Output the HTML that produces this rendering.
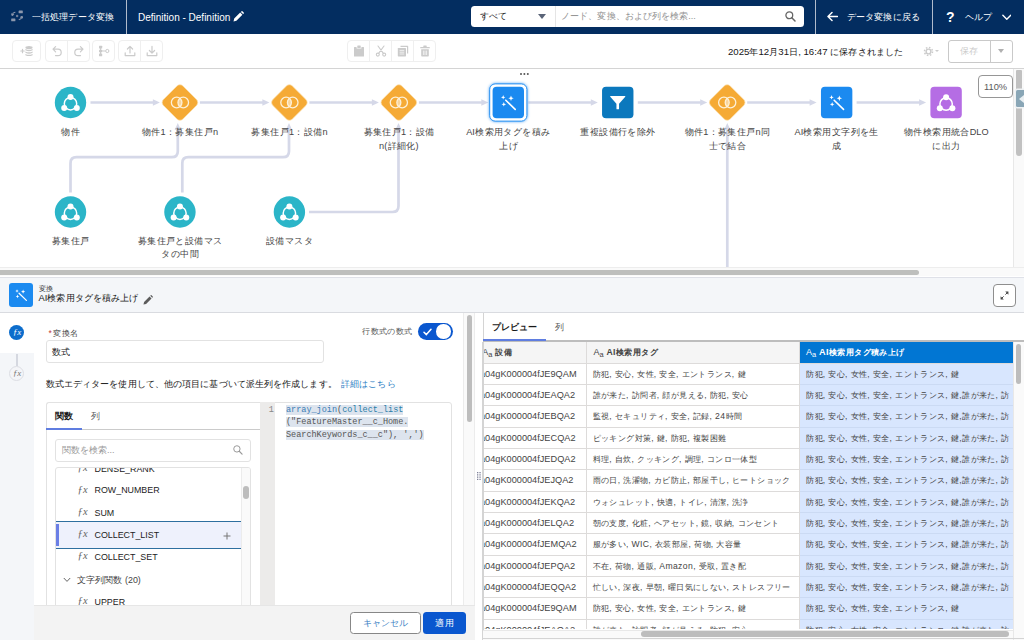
<!DOCTYPE html>
<html lang="ja"><head><meta charset="utf-8">
<style>
*{box-sizing:border-box;margin:0;padding:0}
html,body{width:1024px;height:640px;overflow:hidden;background:#fff;font-family:"Liberation Sans",sans-serif;font-size:11px;color:#181818}
.abs{position:absolute}
.l{font-size:1.09em}
.l6{font-size:1.06em}
.lbl .l{font-size:9.2px}
.c2 .l{font-size:8.6px}
#hdr{position:absolute;left:0;top:0;width:1024px;height:33.7px;background:#032d60;color:#fff}
#hdr .t{position:absolute;top:10.5px;font-size:9.1px;line-height:13px;white-space:nowrap}
#hdr .vd{position:absolute;top:0;width:1px;height:34px;background:#b0bbcc}
#tb{position:absolute;left:0;top:34px;width:1024px;height:35px;background:#fff;border-bottom:1px solid #d4d4d4}
.bg{position:absolute;top:6.3px;height:22px;border:1px solid #efefef;border-radius:4px;background:#fff;display:flex}
.bg>div{width:22px;height:20px;border-right:1px solid #efefef;position:relative}
.bg>div:last-child{border-right:0}
.bg svg{position:absolute;left:5px;top:4px;width:12px;height:12px}
#cv{position:absolute;left:0;top:69px;width:1024px;height:208px;background:#fff;overflow:hidden}
.lbl{position:absolute;width:120px;text-align:center;font-size:9.45px;line-height:13.7px;color:#444;white-space:nowrap}
.nd{position:absolute;width:32px;height:32px}

#bp{position:absolute;left:0;top:276px;width:1024px;height:364px;background:#fff;overflow:hidden}
#bp .ph{position:absolute;left:0;top:0.6px;width:1024px;height:36px;background:#f4f6f9;border-top:1px solid #dfe1e8;border-bottom:1px solid #d9dbe0}
.t84{font-size:8.4px;line-height:11px;white-space:nowrap;color:#444}
.t91{font-size:9.1px;line-height:12px;white-space:nowrap;color:#181818}
.fx{font-family:"Liberation Serif",serif;font-style:italic;font-size:10.5px;line-height:12px;color:#666;position:absolute;left:21.5px;letter-spacing:0.2px}
.li{position:absolute;left:0;width:185px;height:22.2px}
.li .n{position:absolute;left:38.5px;top:5.4px;font-size:8.9px;line-height:12px;color:#222;white-space:nowrap}
.li .fx{top:4.5px}
#tbl{position:absolute;left:483px;top:65.8px;width:531px;height:287px;overflow:hidden}
.row{position:absolute;left:0;width:531px;height:21.33px;border-bottom:1px solid #dddbda;background:#fff}
.row div{position:absolute;top:0;height:100%;font-size:8.4px;line-height:20.8px;white-space:nowrap;overflow:hidden;color:#444;letter-spacing:0.4px}
.c1 span{letter-spacing:0}
.c1{left:-3px;width:106.6px;border-right:1px solid #dddbda}
.c1 span{font-size:9.2px}
.c2{left:103px;width:213.5px;padding-left:6.5px;border-right:1px solid #dddbda}
.c3{left:317px;width:213px;padding-left:6px;background:#d8e6fe;box-shadow:0 1px 0 #cbdaf3}
i{display:inline-block;width:1em;text-align:center;font-style:normal;letter-spacing:0}
</style></head><body>
<div id="hdr">
<svg class="abs" style="left:11px;top:10.4px" width="12.4" height="12" viewBox="0 0 12.4 12"><g fill="#8d98ad"><rect x="7.6" y="0.5" width="4.2" height="2.7" rx="0.5"/><rect x="0.2" y="8.5" width="4.2" height="2.7" rx="0.5"/><circle cx="6.1" cy="5.9" r="1.25" fill="#6f7d98"/></g><g fill="none" stroke="#8d98ad" stroke-width="1.05" stroke-linecap="round" stroke-linejoin="round"><path d="M1.2 5.2 Q1.6 2.6 4 2.2"/><path d="M0.6 3.9 L1.2 5.4 L2.6 4.6"/><path d="M11 6.6 Q10.6 9.2 8.2 9.6"/><path d="M11.6 7.9 L11 6.4 L9.6 7.2"/></g></svg>
<div class="t" style="left:32px"><i>一</i><i>括</i><i>処</i><i>理</i><i>デ</i><i>ー</i><i>タ</i><i>変</i><i>換</i></div>
<div class="vd" style="left:126px"></div>
<div class="t" style="left:138px;font-size:10px">Definition - Definition</div>
<svg class="abs" style="left:233px;top:11px" width="11" height="11" viewBox="0 0 11 11"><path d="M0.5 10.5 L1.2 7.6 L7.2 1.6 L9.4 3.8 L3.4 9.8 Z M7.9 0.9 L8.6 0.2 Q9 -0.1 9.4 0.3 L10.7 1.6 Q11.1 2 10.8 2.4 L10.1 3.1 Z" fill="#fff"/></svg>
<div class="abs" style="left:471px;top:5.5px;width:85px;height:21.7px;background:#fff;border-radius:3.5px 0 0 3.5px;border-right:1px solid #e5e5e5"></div>
<div class="abs" style="left:480px;top:10px;font-size:9.1px;line-height:13px;color:#181818"><i>す</i><i>べ</i><i>て</i></div>
<div class="abs" style="left:537.5px;top:14.3px;width:0;height:0;border-left:4.2px solid transparent;border-right:4.2px solid transparent;border-top:5px solid #5a6478"></div>
<div class="abs" style="left:556px;top:5.5px;width:248px;height:21.7px;background:#fff;border-radius:0 3.5px 3.5px 0"></div>
<div class="abs" style="left:561px;top:10px;font-size:9.1px;line-height:13px;color:#939393;white-space:nowrap"><i>ノ</i><i>ー</i><i>ド</i><i>、</i><i>変</i><i>換</i><i>、</i><i>お</i><i>よ</i><i>び</i><i>列</i><i>を</i><i>検</i><i>索</i>...</div>
<svg class="abs" style="left:785px;top:11px" width="11" height="11" viewBox="0 0 11 11"><circle cx="4.3" cy="4.3" r="3.4" fill="none" stroke="#666" stroke-width="1.3"/><path d="M6.8 6.8 L10 10" stroke="#666" stroke-width="1.5" stroke-linecap="round"/></svg>
<div class="vd" style="left:815px"></div>
<svg class="abs" style="left:827px;top:11px" width="11" height="11" viewBox="0 0 11 11"><path d="M10.5 5.5 H1.2 M5 1.5 L1 5.5 L5 9.5" fill="none" stroke="#fff" stroke-width="1.5" stroke-linecap="round" stroke-linejoin="round"/></svg>
<div class="t" style="left:847px"><i>デ</i><i>ー</i><i>タ</i><i>変</i><i>換</i><i>に</i><i>戻</i><i>る</i></div>
<div class="vd" style="left:932px"></div>
<div class="abs" style="left:946px;top:9.2px;font-size:14px;line-height:17px;font-weight:bold;color:#fff">?</div>
<div class="t" style="left:965px"><i>ヘ</i><i>ル</i><i>プ</i></div>
<svg class="abs" style="left:1001.5px;top:13.5px" width="9.6" height="7" viewBox="0 0 11 8"><path d="M1 1.5 L5.5 6 L10 1.5" fill="none" stroke="#fff" stroke-width="1.6" stroke-linecap="round" stroke-linejoin="round"/></svg>
</div>
<div id="tb">
<div class="bg" style="left:11.5px;width:29.5px"><div style="width:28px"><svg viewBox="0 0 14 12" style="left:7px;width:14px"><g fill="none" stroke="#cbcbcb" stroke-width="1.2" stroke-linecap="round"><path d="M0.8 6 H4.2 M2.5 4.3 V7.7"/></g><g fill="#cbcbcb"><ellipse cx="9" cy="2.4" rx="3.6" ry="1.5"/><path d="M5.4 3.9 Q9 5.6 12.6 3.9 V5.3 Q9 7 5.4 5.3Z"/><path d="M5.4 6.4 Q9 8.1 12.6 6.4 V7.8 Q9 9.5 5.4 7.8Z"/><path d="M5.4 8.9 Q9 10.6 12.6 8.9 V10.2 Q9 11.9 5.4 10.2Z"/></g></svg></div></div>
<div class="bg" style="left:44.5px"><div><svg viewBox="0 0 12 12"><path d="M2.2 4.2 H7 A3.2 3.2 0 0 1 7 10.6 H4.5 M4.6 1.6 L2 4.2 L4.6 6.8" fill="none" stroke="#cbcbcb" stroke-width="1.2" stroke-linecap="round" stroke-linejoin="round"/></svg></div><div style="width:21px"><svg viewBox="0 0 12 12"><path d="M9.8 4.2 H5 A3.2 3.2 0 0 0 5 10.6 H7.5 M7.4 1.6 L10 4.2 L7.4 6.8" fill="none" stroke="#cbcbcb" stroke-width="1.2" stroke-linecap="round" stroke-linejoin="round"/></svg></div></div>
<div class="bg" style="left:92px"><div style="width:21px"><svg viewBox="0 0 12 12"><g fill="#cbcbcb"><rect x="1" y="0.8" width="3.2" height="2.6" rx="0.5"/><rect x="1" y="4.7" width="3.2" height="2.6" rx="0.5"/><rect x="1" y="8.6" width="3.2" height="2.6" rx="0.5"/></g><g fill="none" stroke="#cbcbcb" stroke-width="1"><path d="M2.6 3 V9 M4.2 6 H7.5"/><circle cx="9.3" cy="6" r="1.6"/></g></svg></div></div>
<div class="bg" style="left:117.5px"><div><svg viewBox="0 0 12 12"><path d="M6 8 V1.5 M3.4 4 L6 1.4 L8.6 4 M1.2 7.8 V10.6 H10.8 V7.8" fill="none" stroke="#cbcbcb" stroke-width="1.2" stroke-linecap="round" stroke-linejoin="round"/></svg></div><div style="width:21px"><svg viewBox="0 0 12 12"><path d="M6 1.4 V8 M3.4 5.5 L6 8.1 L8.6 5.5 M1.2 7.8 V10.6 H10.8 V7.8" fill="none" stroke="#cbcbcb" stroke-width="1.2" stroke-linecap="round" stroke-linejoin="round"/></svg></div></div>
<div class="bg" style="left:347px"><div><svg viewBox="0 0 12 12"><g fill="#cbcbcb"><path d="M1.5 2 H3.6 V3.6 H8.4 V2 H10.5 Q11 2 11 2.5 V11 Q11 11.5 10.5 11.5 H1.5 Q1 11.5 1 11 V2.5 Q1 2 1.5 2Z"/><rect x="4.3" y="0.5" width="3.4" height="2.4" rx="0.5"/></g></svg></div><div><svg viewBox="0 0 12 12"><g fill="none" stroke="#cbcbcb" stroke-width="1.1" stroke-linecap="round"><path d="M3 1 L8.4 8.4 M9 1 L3.6 8.4"/><circle cx="2.8" cy="9.6" r="1.5"/><circle cx="9.2" cy="9.6" r="1.5"/></g></svg></div><div><svg viewBox="0 0 12 12"><g fill="#cbcbcb"><path d="M3.5 0.8 H10.6 Q11.2 0.8 11.2 1.4 V8.4 H10 V2 H3.5Z"/><rect x="0.8" y="3" width="8.2" height="8.4" rx="0.6"/></g><path d="M2.6 5.4 H7.2 M2.6 7.2 H7.2 M2.6 9 H7.2" stroke="#fff" stroke-width="0.7"/></svg></div><div style="width:21px"><svg viewBox="0 0 12 12"><g fill="#cbcbcb"><rect x="1.2" y="2" width="9.6" height="1.3" rx="0.4"/><rect x="4.3" y="0.6" width="3.4" height="1.6" rx="0.4"/><path d="M2.2 4.2 H9.8 V10.8 Q9.8 11.5 9.1 11.5 H2.9 Q2.2 11.5 2.2 10.8Z"/></g><path d="M4.4 5.6 V10 M6 5.6 V10 M7.6 5.6 V10" stroke="#fff" stroke-width="0.7"/></svg></div></div>
<div class="abs" style="left:728px;top:11.5px;font-size:9.1px;line-height:12px;white-space:nowrap;color:#181818"><span class="l6">2025</span><i>年</i><span class="l6">12</span><i>月</i><span class="l6">31</span><i>日</i><span class="l6">, 16:47 </span><i>に</i><i>保</i><i>存</i><i>さ</i><i>れ</i><i>ま</i><i>し</i><i>た</i></div>
<svg class="abs" style="left:922.5px;top:11.5px" width="11" height="11" viewBox="0 0 12 12"><g fill="none" stroke="#cbcbcb"><circle cx="6" cy="6" r="2.6" stroke-width="1.6"/><circle cx="6" cy="6" r="4.4" stroke-width="1.6" stroke-dasharray="1.7 1.75"/></g></svg>
<div class="abs" style="left:935px;top:16px;width:0;height:0;border-left:2.2px solid transparent;border-right:2.2px solid transparent;border-top:2.6px solid #cbcbcb"></div>
<div class="abs" style="left:948px;top:6.2px;width:65px;height:22.5px;border:1px solid #c9c9c9;border-radius:3px;background:#fff"></div>
<div class="abs" style="left:990px;top:6.2px;width:1px;height:22.5px;background:#c9c9c9"></div>
<div class="abs" style="left:960px;top:11.3px;font-size:9.1px;line-height:12px;color:#cbcbcb"><i>保</i><i>存</i></div>
<div class="abs" style="left:997.5px;top:15.3px;width:0;height:0;border-left:3.6px solid transparent;border-right:3.6px solid transparent;border-top:4.2px solid #b0b0b0"></div>
</div>
<div id="cv">
<svg class="abs" style="left:0;top:0" width="1024" height="206" viewBox="0 0 1024 206"><path d="M90.5 33.5 H153.9" stroke="#d5d8e8" stroke-width="2.7" fill="none"/><path d="M152.9 30.2 L159.9 33.5 L152.9 36.8Z" fill="#d5d8e8"/><path d="M199.9 33.5 H263.4" stroke="#d5d8e8" stroke-width="2.7" fill="none"/><path d="M262.4 30.2 L269.4 33.5 L262.4 36.8Z" fill="#d5d8e8"/><path d="M309.4 33.5 H372.9" stroke="#d5d8e8" stroke-width="2.7" fill="none"/><path d="M371.9 30.2 L378.9 33.5 L371.9 36.8Z" fill="#d5d8e8"/><path d="M418.9 33.5 H482.3" stroke="#d5d8e8" stroke-width="2.7" fill="none"/><path d="M481.3 30.2 L488.3 33.5 L481.3 36.8Z" fill="#d5d8e8"/><path d="M528.3 33.5 H591.8" stroke="#d5d8e8" stroke-width="2.7" fill="none"/><path d="M590.8 30.2 L597.8 33.5 L590.8 36.8Z" fill="#d5d8e8"/><path d="M637.8 33.5 H701.2" stroke="#d5d8e8" stroke-width="2.7" fill="none"/><path d="M700.2 30.2 L707.2 33.5 L700.2 36.8Z" fill="#d5d8e8"/><path d="M747.2 33.5 H810.6" stroke="#d5d8e8" stroke-width="2.7" fill="none"/><path d="M809.6 30.2 L816.6 33.5 L809.6 36.8Z" fill="#d5d8e8"/><path d="M856.6 33.5 H920.1" stroke="#d5d8e8" stroke-width="2.7" fill="none"/><path d="M919.1 30.2 L926.1 33.5 L919.1 36.8Z" fill="#d5d8e8"/><path d="M70.5 123.5 V94.2 Q70.5 88.2 76.5 88.2 H171.8 Q177.8 88.2 177.8 82.2 V60.0" stroke="#d5d8e8" stroke-width="2.7" fill="none"/><path d="M174.6 61.0 L177.8 54.0 L181.0 61.0Z" fill="#d5d8e8"/><path d="M182.3 123.5 V94.2 Q182.3 88.2 188.3 88.2 H283.0 Q289.0 88.2 289.0 82.2 V60.0" stroke="#d5d8e8" stroke-width="2.7" fill="none"/><path d="M285.8 61.0 L289.0 54.0 L292.2 61.0Z" fill="#d5d8e8"/><path d="M309.0 143.0 H392.5 Q398.5 143.0 398.5 137.0 V60.0" stroke="#d5d8e8" stroke-width="2.7" fill="none"/><path d="M395.3 61.0 L398.5 54.0 L401.7 61.0Z" fill="#d5d8e8"/><path d="M727.3 210 V60.0" stroke="#d5d8e8" stroke-width="2.7" fill="none"/><path d="M724.1 61.0 L727.3 54.0 L730.5 61.0Z" fill="#d5d8e8"/><circle cx="70.50" cy="33.50" r="15.7" fill="#2bb5c8"/><g transform="translate(70.50,33.50)"><circle cx="0" cy="1.2" r="6.2" fill="none" stroke="#fff" stroke-width="1.5"/><circle cx="0" cy="-5.6" r="3" fill="#fff"/><circle cx="-6.3" cy="5.4" r="3" fill="#fff"/><circle cx="6.3" cy="5.4" r="3" fill="#fff"/></g><g transform="translate(179.95,33.50)"><rect x="-13.8" y="-13.8" width="27.6" height="27.6" rx="4.2" transform="rotate(45)" fill="#f5aa35" stroke="#fbe0b0" stroke-width="0.7"/><path d="M0 -4.2 A5.4 5.4 0 0 1 0 4.2 A5.4 5.4 0 0 1 0 -4.2Z" fill="#f9d59d"/><circle cx="-3.3" cy="0" r="5.3" fill="none" stroke="#fdf0d8" stroke-width="1.3"/><circle cx="3.3" cy="0" r="5.3" fill="none" stroke="#fdf0d8" stroke-width="1.3"/></g><g transform="translate(289.40,33.50)"><rect x="-13.8" y="-13.8" width="27.6" height="27.6" rx="4.2" transform="rotate(45)" fill="#f5aa35" stroke="#fbe0b0" stroke-width="0.7"/><path d="M0 -4.2 A5.4 5.4 0 0 1 0 4.2 A5.4 5.4 0 0 1 0 -4.2Z" fill="#f9d59d"/><circle cx="-3.3" cy="0" r="5.3" fill="none" stroke="#fdf0d8" stroke-width="1.3"/><circle cx="3.3" cy="0" r="5.3" fill="none" stroke="#fdf0d8" stroke-width="1.3"/></g><g transform="translate(398.85,33.50)"><rect x="-13.8" y="-13.8" width="27.6" height="27.6" rx="4.2" transform="rotate(45)" fill="#f5aa35" stroke="#fbe0b0" stroke-width="0.7"/><path d="M0 -4.2 A5.4 5.4 0 0 1 0 4.2 A5.4 5.4 0 0 1 0 -4.2Z" fill="#f9d59d"/><circle cx="-3.3" cy="0" r="5.3" fill="none" stroke="#fdf0d8" stroke-width="1.3"/><circle cx="3.3" cy="0" r="5.3" fill="none" stroke="#fdf0d8" stroke-width="1.3"/></g><rect x="489.70" y="14.90" width="37.2" height="37.2" rx="5.5" fill="#fff" stroke="#1b8af0" stroke-width="0.9" style="filter:drop-shadow(0 0 1.5px #3f9bf3)"/><rect x="492.60" y="17.80" width="31.4" height="31.4" rx="4" fill="#1b8af0"/><g transform="translate(508.30,33.50)"><path d="M-2.5 -2.3 L6.9 6.9" stroke="#fff" stroke-width="1.6" stroke-linecap="round"/><g fill="#fff"><path d="M-5.1 -7.4 L-4.48 -5.82 L-2.8999999999999995 -5.2 L-4.48 -4.58 L-5.1 -3.0 L-5.72 -4.58 L-7.3 -5.2 L-5.72 -5.82Z"/><path d="M2.7 -7.0 L3.46 -5.06 L5.4 -4.3 L3.46 -3.54 L2.7 -1.5999999999999996 L1.94 -3.54 L0.0 -4.3 L1.94 -5.06Z"/><path d="M-4.5 -0.4999999999999998 L-3.86 1.16 L-2.2 1.8 L-3.86 2.44 L-4.5 4.1 L-5.14 2.44 L-6.8 1.8 L-5.14 1.16Z"/></g></g><rect x="602.05" y="17.80" width="31.4" height="31.4" rx="4" fill="#0b78bd"/><g transform="translate(617.75,33.50)"><path d="M-7.2 -6.4 H7.2 Q7.9 -6.4 7.5 -5.7 L1.3 1.2 V6.2 Q1.3 6.8 0.7 6.8 H-0.7 Q-1.3 6.8 -1.3 6.2 V1.2 L-7.5 -5.7 Q-7.9 -6.4 -7.2 -6.4Z" fill="#fff"/></g><g transform="translate(727.20,33.50)"><rect x="-13.8" y="-13.8" width="27.6" height="27.6" rx="4.2" transform="rotate(45)" fill="#f5aa35" stroke="#fbe0b0" stroke-width="0.7"/><path d="M0 -4.2 A5.4 5.4 0 0 1 0 4.2 A5.4 5.4 0 0 1 0 -4.2Z" fill="#f9d59d"/><circle cx="-3.3" cy="0" r="5.3" fill="none" stroke="#fdf0d8" stroke-width="1.3"/><circle cx="3.3" cy="0" r="5.3" fill="none" stroke="#fdf0d8" stroke-width="1.3"/></g><rect x="820.95" y="17.80" width="31.4" height="31.4" rx="4" fill="#1b8af0"/><g transform="translate(836.65,33.50)"><path d="M-2.5 -2.3 L6.9 6.9" stroke="#fff" stroke-width="1.6" stroke-linecap="round"/><g fill="#fff"><path d="M-5.1 -7.4 L-4.48 -5.82 L-2.8999999999999995 -5.2 L-4.48 -4.58 L-5.1 -3.0 L-5.72 -4.58 L-7.3 -5.2 L-5.72 -5.82Z"/><path d="M2.7 -7.0 L3.46 -5.06 L5.4 -4.3 L3.46 -3.54 L2.7 -1.5999999999999996 L1.94 -3.54 L0.0 -4.3 L1.94 -5.06Z"/><path d="M-4.5 -0.4999999999999998 L-3.86 1.16 L-2.2 1.8 L-3.86 2.44 L-4.5 4.1 L-5.14 2.44 L-6.8 1.8 L-5.14 1.16Z"/></g></g><rect x="930.40" y="17.80" width="31.4" height="31.4" rx="4" fill="#b56de4"/><g transform="translate(946.10,33.80)"><circle cx="0" cy="1.2" r="6.2" fill="none" stroke="#fff" stroke-width="1.5"/><circle cx="0" cy="-5.6" r="3" fill="#fff"/><circle cx="-6.3" cy="5.4" r="3" fill="#fff"/><circle cx="6.3" cy="5.4" r="3" fill="#fff"/></g><circle cx="70.50" cy="143.00" r="15.7" fill="#2bb5c8"/><g transform="translate(70.50,143.00)"><circle cx="0" cy="1.2" r="6.2" fill="none" stroke="#fff" stroke-width="1.5"/><circle cx="0" cy="-5.6" r="3" fill="#fff"/><circle cx="-6.3" cy="5.4" r="3" fill="#fff"/><circle cx="6.3" cy="5.4" r="3" fill="#fff"/></g><circle cx="179.95" cy="143.00" r="15.7" fill="#2bb5c8"/><g transform="translate(179.95,143.00)"><circle cx="0" cy="1.2" r="6.2" fill="none" stroke="#fff" stroke-width="1.5"/><circle cx="0" cy="-5.6" r="3" fill="#fff"/><circle cx="-6.3" cy="5.4" r="3" fill="#fff"/><circle cx="6.3" cy="5.4" r="3" fill="#fff"/></g><circle cx="289.40" cy="143.00" r="15.7" fill="#2bb5c8"/><g transform="translate(289.40,143.00)"><circle cx="0" cy="1.2" r="6.2" fill="none" stroke="#fff" stroke-width="1.5"/><circle cx="0" cy="-5.6" r="3" fill="#fff"/><circle cx="-6.3" cy="5.4" r="3" fill="#fff"/><circle cx="6.3" cy="5.4" r="3" fill="#fff"/></g></svg>
<div class="lbl" style="left:10.5px;top:55.5px"><i>物</i><i>件</i></div><div class="lbl" style="left:119.9px;top:55.5px"><i>物</i><i>件</i><span class="l">1</span><i>：</i><i>募</i><i>集</i><i>住</i><i>戸</i><span class="l">n</span></div><div class="lbl" style="left:229.4px;top:55.5px"><i>募</i><i>集</i><i>住</i><i>戸</i><span class="l">1</span><i>：</i><i>設</i><i>備</i><span class="l">n</span></div><div class="lbl" style="left:338.9px;top:55.5px"><i>募</i><i>集</i><i>住</i><i>戸</i><span class="l">1</span><i>：</i><i>設</i><i>備</i><br><span class="l">n(</span><i>詳</i><i>細</i><i>化</i><span class="l">)</span></div><div class="lbl" style="left:448.3px;top:55.5px"><span class="l">AI</span><i>検</i><i>索</i><i>用</i><i>タ</i><i>グ</i><i>を</i><i>積</i><i>み</i><br><i>上</i><i>げ</i></div><div class="lbl" style="left:557.8px;top:55.5px"><i>重</i><i>複</i><i>設</i><i>備</i><i>行</i><i>を</i><i>除</i><i>外</i></div><div class="lbl" style="left:667.2px;top:55.5px"><i>物</i><i>件</i><span class="l">1</span><i>：</i><i>募</i><i>集</i><i>住</i><i>戸</i><span class="l">n</span><i>同</i><br><i>士</i><i>で</i><i>結</i><i>合</i></div><div class="lbl" style="left:776.6px;top:55.5px"><span class="l">AI</span><i>検</i><i>索</i><i>用</i><i>文</i><i>字</i><i>列</i><i>を</i><i>生</i><br><i>成</i></div><div class="lbl" style="left:886.1px;top:55.5px"><i>物</i><i>件</i><i>検</i><i>索</i><i>用</i><i>統</i><i>合</i><span class="l">DLO</span><br><i>に</i><i>出</i><i>力</i></div><div class="lbl" style="left:10.5px;top:164.5px"><i>募</i><i>集</i><i>住</i><i>戸</i></div><div class="lbl" style="left:119.9px;top:164.5px"><i>募</i><i>集</i><i>住</i><i>戸</i><i>と</i><i>設</i><i>備</i><i>マ</i><i>ス</i><br><i>タ</i><i>の</i><i>中</i><i>間</i></div><div class="lbl" style="left:229.4px;top:164.5px"><i>設</i><i>備</i><i>マ</i><i>ス</i><i>タ</i></div>
<div class="abs" style="left:520.4px;top:3.8px;width:2px;height:2px;border-radius:1px;background:#555;box-shadow:3.4px 0 0 #555,6.8px 0 0 #555"></div>
<div class="abs" style="left:978.3px;top:6.2px;width:34.5px;height:22.8px;border:1px solid #969696;border-radius:4px;background:#fff;font-size:9.3px;line-height:23px;text-align:center;color:#5a5a5a">110%</div>
<div class="abs" style="left:1013px;top:0;width:11px;height:198px;background:#fafafa;border-left:1px solid #e8e8e8"></div>
<div class="abs" style="left:1016.2px;top:0.6px;width:5.8px;height:86.2px;border-radius:1px 1px 3px 3px;background:#c1c1c1"></div>
<div class="abs" style="left:1015.8px;top:21px;width:9px;height:17px;background:#89a6b6;border-radius:1.5px 0 0 1.5px;box-shadow:0 0 0 1.5px #eef1f3"></div>
<div class="abs" style="left:1018.5px;top:26px;width:0;height:0;border-top:4px solid transparent;border-bottom:4px solid transparent;border-right:5px solid #e9eff2"></div>
<div class="abs" style="left:0;top:197.5px;width:1024px;height:10px;background:#fafafa;border-top:1px solid #ededed"></div>
<div class="abs" style="left:0;top:200.7px;width:918.7px;height:5.8px;border-radius:0 3px 3px 0;background:#bebfbd"></div>
</div>
<div id="bp">
<div class="ph"></div>
<svg class="abs" style="left:8.5px;top:7px" width="24" height="24" viewBox="0 0 24 24"><rect width="24" height="24" rx="3" fill="#1b8af0"/><g transform="translate(12,12) scale(0.78)"><path d="M-2.5 -2.3 L6.9 6.9" stroke="#fff" stroke-width="1.6" stroke-linecap="round"/><g fill="#fff"><path d="M-5.1 -7.4 L-4.48 -5.82 L-2.8999999999999995 -5.2 L-4.48 -4.58 L-5.1 -3.0 L-5.72 -4.58 L-7.3 -5.2 L-5.72 -5.82Z"/><path d="M2.7 -7.0 L3.46 -5.06 L5.4 -4.3 L3.46 -3.54 L2.7 -1.5999999999999996 L1.94 -3.54 L0.0 -4.3 L1.94 -5.06Z"/><path d="M-4.5 -0.4999999999999998 L-3.86 1.16 L-2.2 1.8 L-3.86 2.44 L-4.5 4.1 L-5.14 2.44 L-6.8 1.8 L-5.14 1.16Z"/></g></g></svg>
<div class="abs" style="left:38.5px;top:8.5px;font-size:7px;line-height:8px;color:#333"><i>変</i><i>換</i></div>
<div class="abs t84" style="left:38.5px;top:17px;color:#181818;font-size:9.1px;letter-spacing:0"><span style="font-size:9.3px">AI</span><i>検</i><i>索</i><i>用</i><i>タ</i><i>グ</i><i>を</i><i>積</i><i>み</i><i>上</i><i>げ</i></div>
<svg class="abs" style="left:143px;top:18.5px" width="10" height="10" viewBox="0 0 11 11"><path d="M0.5 10.5 L1.2 7.6 L7.2 1.6 L9.4 3.8 L3.4 9.8 Z M7.9 0.9 L8.6 0.2 Q9 -0.1 9.4 0.3 L10.7 1.6 Q11.1 2 10.8 2.4 L10.1 3.1 Z" fill="#5c5c5c"/></svg>
<div class="abs" style="left:992.5px;top:8px;width:23px;height:22.5px;border:1px solid #8e8e8e;border-radius:4px;background:#fff"></div>
<svg class="abs" style="left:999.5px;top:14.5px" width="9" height="9" viewBox="0 0 9 9"><path d="M5.2 0.6 H8.4 V3.8Z M0.6 5.2 V8.4 H3.8Z" fill="#444"/><path d="M7.6 1.4 L5.4 3.6 M1.4 7.6 L3.6 5.4" stroke="#444" stroke-width="1"/></svg>

<!-- left rail -->
<div class="abs" style="left:0;top:37px;width:33.5px;height:327px;background:#f4f6f9"></div>
<div class="abs" style="left:0;top:37px;width:33.5px;height:40px;background:#fff"></div>
<div class="abs" style="left:9.3px;top:48.9px;width:15.2px;height:15.2px;border-radius:50%;background:#0c6dcc;color:#fff;font-family:'Liberation Serif',serif;font-style:italic;font-size:9px;line-height:14.8px;text-align:center;letter-spacing:-0.3px">&#402;x</div>
<div class="abs" style="left:16.4px;top:77.5px;width:1.2px;height:12.5px;background:#d5d8e0"></div>
<div class="abs" style="left:9.3px;top:89.7px;width:15.2px;height:15.2px;border-radius:50%;background:#f4f5f8;border:1px solid #dcdee4;color:#777;font-family:'Liberation Serif',serif;font-style:italic;font-size:9px;line-height:12.8px;text-align:center;letter-spacing:-0.3px">&#402;x</div>

<!-- form -->
<div class="abs" style="left:48.5px;top:51.5px;font-size:8.4px;line-height:11px;color:#c23934">*</div>
<div class="abs t84" style="left:53px;top:51.5px"><i>変</i><i>換</i><i>名</i></div>
<div class="abs t84" style="left:362px;top:49.8px;color:#555"><i>行</i><i>数</i><i>式</i><i>の</i><i>数</i><i>式</i></div>
<div class="abs" style="left:418px;top:46.8px;width:34.5px;height:17.5px;border-radius:9px;background:#0a57cf"></div>
<div class="abs" style="left:436px;top:48.3px;width:14.5px;height:14.5px;border-radius:50%;background:#fff"></div>
<svg class="abs" style="left:423px;top:51.5px" width="9" height="8" viewBox="0 0 9 8"><path d="M1 4.2 L3.4 6.6 L8 1.2" fill="none" stroke="#fff" stroke-width="1.5" stroke-linecap="round" stroke-linejoin="round"/></svg>
<div class="abs" style="left:45.5px;top:64.3px;width:278.5px;height:22.6px;border:1px solid #e2e2e2;border-radius:3px;background:#fff"></div>
<div class="abs t91" style="left:52px;top:70px"><i>数</i><i>式</i></div>
<div class="abs t91" style="left:45.7px;top:102px"><i>数</i><i>式</i><i>エ</i><i>デ</i><i>ィ</i><i>タ</i><i>ー</i><i>を</i><i>使</i><i>用</i><i>し</i><i>て</i><i>、</i><i>他</i><i>の</i><i>項</i><i>目</i><i>に</i><i>基</i><i>づ</i><i>い</i><i>て</i><i>派</i><i>生</i><i>列</i><i>を</i><i>作</i><i>成</i><i>し</i><i>ま</i><i>す</i><i>。</i></div>
<div class="abs t91" style="left:341px;top:102px;color:#2f80c4"><i>詳</i><i>細</i><i>は</i><i>こ</i><i>ち</i><i>ら</i></div>

<!-- tabs box -->
<div class="abs" style="left:45.8px;top:125.5px;width:214.5px;height:240px;border:1px solid #e2e2e2;border-right:0;border-radius:3px 0 0 0;background:#fff"></div>
<div class="abs" style="left:46px;top:152.6px;width:214px;height:1px;background:#cbcbcb"></div>
<div class="abs" style="left:46px;top:151.7px;width:36px;height:2px;background:#5f7de0"></div>
<div class="abs t91" style="left:55px;top:134px;font-weight:bold;color:#181818"><i>関</i><i>数</i></div>
<div class="abs t91" style="left:90.5px;top:134px;color:#5c5c5c"><i>列</i></div>
<div class="abs" style="left:55px;top:163px;width:195.5px;height:22.5px;border:1px solid #e2e2e2;border-radius:3px;background:#fff"></div>
<div class="abs t91" style="left:61.5px;top:168.3px;color:#999"><i>関</i><i>数</i><i>を</i><i>検</i><i>索</i>...</div>
<svg class="abs" style="left:233px;top:169.3px" width="10" height="10" viewBox="0 0 11 11"><circle cx="4.3" cy="4.3" r="3.5" fill="none" stroke="#9a9a9a" stroke-width="1.1"/><path d="M6.9 6.9 L10 10" stroke="#9a9a9a" stroke-width="1.3" stroke-linecap="round"/></svg>
<div class="abs" style="left:55px;top:191.2px;width:195.5px;height:175px;border:1px solid #e2e2e2;border-radius:3px 3px 0 0;background:#fff;overflow:hidden">
 <div class="abs" style="left:0;top:53px;width:185px;height:27.5px;background:#eef1fc;border-top:1.3px solid #2d6f9f;border-bottom:1.3px solid #2d6f9f"></div>
 <div class="abs" style="left:0;top:55.8px;width:3px;height:22px;background:#6b7fe6"></div>
 <div class="li" style="top:-11.0px"><span class="fx">&#402;x</span><span class="n">DENSE_RANK</span></div><div class="li" style="top:10.9px"><span class="fx">&#402;x</span><span class="n">ROW_NUMBER</span></div><div class="li" style="top:33.1px"><span class="fx">&#402;x</span><span class="n">SUM</span></div><div class="li" style="top:55.3px"><span class="fx">&#402;x</span><span class="n">COLLECT_LIST</span></div><div class="li" style="top:77.7px"><span class="fx">&#402;x</span><span class="n">COLLECT_SET</span></div><div class="li" style="top:122.2px"><span class="fx">&#402;x</span><span class="n">UPPER</span></div>
 <svg class="abs" style="left:166.5px;top:63.5px" width="8" height="8" viewBox="0 0 8 8"><path d="M4 0.5 V7.5 M0.5 4 H7.5" stroke="#777" stroke-width="1"/></svg>
 <svg class="abs" style="left:7px;top:108.5px" width="8" height="6" viewBox="0 0 8 6"><path d="M0.8 1 L4 4.4 L7.2 1" fill="none" stroke="#666" stroke-width="1"/></svg>
 <div class="abs" style="left:21px;top:106.3px;font-size:9.1px;line-height:12px;color:#444;white-space:nowrap"><i>文</i><i>字</i><i>列</i><i>関</i><i>数</i> <span style="font-size:8.9px">(20)</span></div>
 <div class="abs" style="left:185px;top:0;width:10px;height:175px;background:#fafafa;border-left:1px solid #ececec"></div>
 <div class="abs" style="left:187.3px;top:18px;width:5.6px;height:13px;border-radius:3px;background:#bdbdbd"></div>
</div>

<!-- editor -->
<div class="abs" style="left:260px;top:125.5px;width:191.5px;height:240px;border:1px solid #e2e2e2;border-radius:0 3px 0 0;background:#fff"></div>
<div class="abs" style="left:260.3px;top:126px;width:14.5px;height:240px;background:#ecebea"></div>
<div class="abs" style="left:268.8px;top:127.8px;font-family:'Liberation Mono',monospace;font-size:8.5px;line-height:12.65px;color:#888">1</div>
<div class="abs" style="left:286px;top:127.8px;font-family:'Liberation Mono',monospace;font-size:8.5px;line-height:12.55px;color:#555;white-space:pre"><span style="background:#dde4ee"><span style="color:#3b7db5">array_join</span>(<span style="color:#2a7ea8">collect_list</span></span>
<span style="background:#dde4ee">("FeatureMaster__c_Home.</span>
<span style="background:#dde4ee">SearchKeywords_c__c"), ',')</span></div>

<!-- form scrollbar -->
<div class="abs" style="left:463px;top:37px;width:11.5px;height:292px;background:#fafafa;border-left:1px solid #ececec;border-right:1px solid #ececec"></div>
<div class="abs" style="left:466.5px;top:39.3px;width:5.6px;height:107px;border-radius:3px;background:#bdbdbd"></div>

<!-- footer -->
<div class="abs" style="left:33.5px;top:329px;width:441px;height:35px;background:#f3f3f3;border-top:1px solid #e6e6e6"></div>
<div class="abs" style="left:350px;top:335.5px;width:70.5px;height:22.5px;border:1px solid #878787;border-radius:3.5px;background:#fff;font-size:9.1px;line-height:20.5px;text-align:center;color:#3b7fc4"><i>キ</i><i>ャ</i><i>ン</i><i>セ</i><i>ル</i></div>
<div class="abs" style="left:423px;top:335.5px;width:43px;height:22.5px;border-radius:3.5px;background:#0a57cf;font-size:9.1px;line-height:22px;text-align:center;color:#fff"><i>適</i><i>用</i></div>

<!-- divider handle -->
<svg class="abs" style="left:476.8px;top:196.3px" width="4" height="8.2" viewBox="0 0 4 8.2"><g fill="#7f8198"><rect x="0" y="0" width="1.3" height="1.3"/><rect x="0" y="2.25" width="1.3" height="1.3"/><rect x="0" y="4.5" width="1.3" height="1.3"/><rect x="0" y="6.75" width="1.3" height="1.3"/><rect x="2.4" y="0" width="1.3" height="1.3"/><rect x="2.4" y="2.25" width="1.3" height="1.3"/><rect x="2.4" y="4.5" width="1.3" height="1.3"/><rect x="2.4" y="6.75" width="1.3" height="1.3"/></g></svg>

<!-- right panel -->
<div class="abs" style="left:482.5px;top:37px;width:1px;height:327px;background:#d4d4d4"></div>
<div class="abs t91" style="left:492px;top:45.3px;font-weight:bold;color:#181818"><i>プ</i><i>レ</i><i>ビ</i><i>ュ</i><i>ー</i></div>
<div class="abs t91" style="left:555px;top:45.3px;color:#5c5c5c"><i>列</i></div>
<div class="abs" style="left:483px;top:64.3px;width:541px;height:1.5px;background:#bdbdbd"></div>
<div class="abs" style="left:483px;top:62.9px;width:63px;height:2.5px;background:#5f7de0"></div>
<div id="tbl">
 <div class="row" style="top:0;height:21.75px;background:#f5f5f5"><div class="c1" style="left:-3.4px;width:107px;font-weight:bold;line-height:21px">&nbsp;<span style="font-size:9px;font-weight:normal;letter-spacing:0">A</span><span style="font-size:7.4px;font-weight:normal;position:relative;top:2px;letter-spacing:0">a</span> <i>設</i><i>備</i></div><div class="c2" style="font-weight:bold;line-height:21px;padding-left:7.5px"><span style="font-size:9px;font-weight:normal;letter-spacing:0">A</span><span style="font-size:7.4px;font-weight:normal;position:relative;top:2px;letter-spacing:0">a</span> <span class="l">AI</span><i>検</i><i>索</i><i>用</i><i>タ</i><i>グ</i></div><div class="c3" style="background:#0176d3;color:#fff;font-weight:bold;line-height:21px;box-shadow:none;height:21.2px"><span style="font-size:9px;font-weight:normal;letter-spacing:0">A</span><span style="font-size:7.4px;font-weight:normal;position:relative;top:2px;letter-spacing:0">a</span> <span class="l">AI</span><i>検</i><i>索</i><i>用</i><i>タ</i><i>グ</i><i>積</i><i>み</i><i>上</i><i>げ</i></div></div>
 <div class="row" style="top:21.75px"><div class="c1"><span>a04gK000004fJE9QAM</span></div><div class="c2"><i>防</i><i>犯</i>, <i>安</i><i>心</i>, <i>女</i><i>性</i>, <i>安</i><i>全</i>, <i>エ</i><i>ン</i><i>ト</i><i>ラ</i><i>ン</i><i>ス</i>, <i>鍵</i></div><div class="c3"><i>防</i><i>犯</i>, <i>安</i><i>心</i>, <i>女</i><i>性</i>, <i>安</i><i>全</i>, <i>エ</i><i>ン</i><i>ト</i><i>ラ</i><i>ン</i><i>ス</i>, <i>鍵</i></div></div>
<div class="row" style="top:43.08px"><div class="c1"><span>a04gK000004fJEAQA2</span></div><div class="c2"><i>誰</i><i>が</i><i>来</i><i>た</i>, <i>訪</i><i>問</i><i>者</i>, <i>顔</i><i>が</i><i>見</i><i>え</i><i>る</i>, <i>防</i><i>犯</i>, <i>安</i><i>心</i></div><div class="c3"><i>防</i><i>犯</i>, <i>安</i><i>心</i>, <i>女</i><i>性</i>, <i>安</i><i>全</i>, <i>エ</i><i>ン</i><i>ト</i><i>ラ</i><i>ン</i><i>ス</i>, <i>鍵</i>,<i>誰</i><i>が</i><i>来</i><i>た</i>, <i>訪</i></div></div>
<div class="row" style="top:64.41px"><div class="c1"><span>a04gK000004fJEBQA2</span></div><div class="c2"><i>監</i><i>視</i>, <i>セ</i><i>キ</i><i>ュ</i><i>リ</i><i>テ</i><i>ィ</i>, <i>安</i><i>全</i>, <i>記</i><i>録</i>, <span class="l">24</span><i>時</i><i>間</i></div><div class="c3"><i>防</i><i>犯</i>, <i>安</i><i>心</i>, <i>女</i><i>性</i>, <i>安</i><i>全</i>, <i>エ</i><i>ン</i><i>ト</i><i>ラ</i><i>ン</i><i>ス</i>, <i>鍵</i>,<i>誰</i><i>が</i><i>来</i><i>た</i>, <i>訪</i></div></div>
<div class="row" style="top:85.74px"><div class="c1"><span>a04gK000004fJECQA2</span></div><div class="c2"><i>ピ</i><i>ッ</i><i>キ</i><i>ン</i><i>グ</i><i>対</i><i>策</i>, <i>鍵</i>, <i>防</i><i>犯</i>, <i>複</i><i>製</i><i>困</i><i>難</i></div><div class="c3"><i>防</i><i>犯</i>, <i>安</i><i>心</i>, <i>女</i><i>性</i>, <i>安</i><i>全</i>, <i>エ</i><i>ン</i><i>ト</i><i>ラ</i><i>ン</i><i>ス</i>, <i>鍵</i>,<i>誰</i><i>が</i><i>来</i><i>た</i>, <i>訪</i></div></div>
<div class="row" style="top:107.07px"><div class="c1"><span>a04gK000004fJEDQA2</span></div><div class="c2"><i>料</i><i>理</i>, <i>自</i><i>炊</i>, <i>ク</i><i>ッ</i><i>キ</i><i>ン</i><i>グ</i>, <i>調</i><i>理</i>, <i>コ</i><i>ン</i><i>ロ</i><i>一</i><i>体</i><i>型</i></div><div class="c3"><i>防</i><i>犯</i>, <i>安</i><i>心</i>, <i>女</i><i>性</i>, <i>安</i><i>全</i>, <i>エ</i><i>ン</i><i>ト</i><i>ラ</i><i>ン</i><i>ス</i>, <i>鍵</i>,<i>誰</i><i>が</i><i>来</i><i>た</i>, <i>訪</i></div></div>
<div class="row" style="top:128.40px"><div class="c1"><span>a04gK000004fJEJQA2</span></div><div class="c2"><i>雨</i><i>の</i><i>日</i>, <i>洗</i><i>濯</i><i>物</i>, <i>カ</i><i>ビ</i><i>防</i><i>止</i>, <i>部</i><i>屋</i><i>干</i><i>し</i>, <i>ヒ</i><i>ー</i><i>ト</i><i>シ</i><i>ョ</i><i>ッ</i><i>ク</i></div><div class="c3"><i>防</i><i>犯</i>, <i>安</i><i>心</i>, <i>女</i><i>性</i>, <i>安</i><i>全</i>, <i>エ</i><i>ン</i><i>ト</i><i>ラ</i><i>ン</i><i>ス</i>, <i>鍵</i>,<i>誰</i><i>が</i><i>来</i><i>た</i>, <i>訪</i></div></div>
<div class="row" style="top:149.73px"><div class="c1"><span>a04gK000004fJEKQA2</span></div><div class="c2"><i>ウ</i><i>ォ</i><i>シ</i><i>ュ</i><i>レ</i><i>ッ</i><i>ト</i>, <i>快</i><i>適</i>, <i>ト</i><i>イ</i><i>レ</i>, <i>清</i><i>潔</i>, <i>洗</i><i>浄</i></div><div class="c3"><i>防</i><i>犯</i>, <i>安</i><i>心</i>, <i>女</i><i>性</i>, <i>安</i><i>全</i>, <i>エ</i><i>ン</i><i>ト</i><i>ラ</i><i>ン</i><i>ス</i>, <i>鍵</i>,<i>誰</i><i>が</i><i>来</i><i>た</i>, <i>訪</i></div></div>
<div class="row" style="top:171.06px"><div class="c1"><span>a04gK000004fJELQA2</span></div><div class="c2"><i>朝</i><i>の</i><i>支</i><i>度</i>, <i>化</i><i>粧</i>, <i>ヘ</i><i>ア</i><i>セ</i><i>ッ</i><i>ト</i>, <i>鏡</i>, <i>収</i><i>納</i>, <i>コ</i><i>ン</i><i>セ</i><i>ン</i><i>ト</i></div><div class="c3"><i>防</i><i>犯</i>, <i>安</i><i>心</i>, <i>女</i><i>性</i>, <i>安</i><i>全</i>, <i>エ</i><i>ン</i><i>ト</i><i>ラ</i><i>ン</i><i>ス</i>, <i>鍵</i>,<i>誰</i><i>が</i><i>来</i><i>た</i>, <i>訪</i></div></div>
<div class="row" style="top:192.39px"><div class="c1"><span>a04gK000004fJEMQA2</span></div><div class="c2"><i>服</i><i>が</i><i>多</i><i>い</i>, <span class="l">WIC</span>, <i>衣</i><i>装</i><i>部</i><i>屋</i>, <i>荷</i><i>物</i>, <i>大</i><i>容</i><i>量</i></div><div class="c3"><i>防</i><i>犯</i>, <i>安</i><i>心</i>, <i>女</i><i>性</i>, <i>安</i><i>全</i>, <i>エ</i><i>ン</i><i>ト</i><i>ラ</i><i>ン</i><i>ス</i>, <i>鍵</i>,<i>誰</i><i>が</i><i>来</i><i>た</i>, <i>訪</i></div></div>
<div class="row" style="top:213.72px"><div class="c1"><span>a04gK000004fJEPQA2</span></div><div class="c2"><i>不</i><i>在</i>, <i>荷</i><i>物</i>, <i>通</i><i>販</i>, <span class="l">Amazon</span>, <i>受</i><i>取</i>, <i>置</i><i>き</i><i>配</i></div><div class="c3"><i>防</i><i>犯</i>, <i>安</i><i>心</i>, <i>女</i><i>性</i>, <i>安</i><i>全</i>, <i>エ</i><i>ン</i><i>ト</i><i>ラ</i><i>ン</i><i>ス</i>, <i>鍵</i>,<i>誰</i><i>が</i><i>来</i><i>た</i>, <i>訪</i></div></div>
<div class="row" style="top:235.05px"><div class="c1"><span>a04gK000004fJEQQA2</span></div><div class="c2"><i>忙</i><i>し</i><i>い</i>, <i>深</i><i>夜</i>, <i>早</i><i>朝</i>, <i>曜</i><i>日</i><i>気</i><i>に</i><i>し</i><i>な</i><i>い</i>, <i>ス</i><i>ト</i><i>レ</i><i>ス</i><i>フ</i><i>リ</i><i>ー</i></div><div class="c3"><i>防</i><i>犯</i>, <i>安</i><i>心</i>, <i>女</i><i>性</i>, <i>安</i><i>全</i>, <i>エ</i><i>ン</i><i>ト</i><i>ラ</i><i>ン</i><i>ス</i>, <i>鍵</i>,<i>誰</i><i>が</i><i>来</i><i>た</i>, <i>訪</i></div></div>
<div class="row" style="top:256.38px"><div class="c1"><span>a04gK000004fJE9QAM</span></div><div class="c2"><i>防</i><i>犯</i>, <i>安</i><i>心</i>, <i>女</i><i>性</i>, <i>安</i><i>全</i>, <i>エ</i><i>ン</i><i>ト</i><i>ラ</i><i>ン</i><i>ス</i>, <i>鍵</i></div><div class="c3"><i>防</i><i>犯</i>, <i>安</i><i>心</i>, <i>女</i><i>性</i>, <i>安</i><i>全</i>, <i>エ</i><i>ン</i><i>ト</i><i>ラ</i><i>ン</i><i>ス</i>, <i>鍵</i></div></div>
<div class="row" style="top:277.71px"><div class="c1"><span>a04gK000004fJEAQA2</span></div><div class="c2"><i>誰</i><i>が</i><i>来</i><i>た</i>, <i>訪</i><i>問</i><i>者</i>, <i>顔</i><i>が</i><i>見</i><i>え</i><i>る</i>, <i>防</i><i>犯</i>, <i>安</i><i>心</i></div><div class="c3"><i>防</i><i>犯</i>, <i>安</i><i>心</i>, <i>女</i><i>性</i>, <i>安</i><i>全</i>, <i>エ</i><i>ン</i><i>ト</i><i>ラ</i><i>ン</i><i>ス</i>, <i>鍵</i>,<i>誰</i><i>が</i><i>来</i><i>た</i>, <i>訪</i></div></div>

</div>
<div class="abs" style="left:482.4px;top:65.5px;width:1.3px;height:298px;background:#d4d4d4"></div>
<div class="abs" style="left:1013px;top:65.5px;width:11px;height:298px;background:#fafafa;border-left:1px solid #e8e8e8"></div>
<div class="abs" style="left:1015.6px;top:68px;width:5.6px;height:39.5px;border-radius:3px;background:#bdbdbd"></div>
<div class="abs" style="left:483px;top:353.5px;width:530px;height:10px;background:#fafafa;border-top:1px solid #e8e8e8"></div>
<div class="abs" style="left:641px;top:355.3px;width:368px;height:5.3px;border-radius:3px;background:#bdbdbd"></div>
<div class="abs" style="left:483px;top:362px;width:541px;height:1px;background:#d4d4d4"></div>
</div>
</body></html>
